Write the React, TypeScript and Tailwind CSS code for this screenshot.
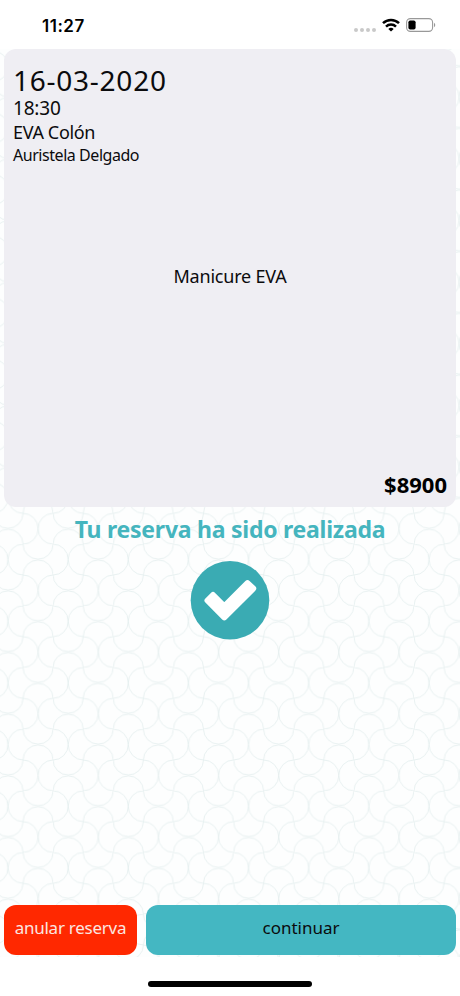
import React from 'react';

const BOOKING = {
  date: '16-03-2020',
  time: '18:30',
  place: 'EVA Colón',
  professional: 'Auristela Delgado',
  service: 'Manicure EVA',
  price: '$8900',
};

// One tile of the wavy lattice: every edge of a 2x2 grid is a half circle
const TILE_PATH = [
  'M0 0a15 15 0 0 1 30 0a15 15 0 0 0 30 0',
  'M0 30.83a15 15 0 0 0 30 0a15 15 0 0 1 30 0',
  'M0 61.66a15 15 0 0 1 30 0a15 15 0 0 0 30 0',
  'M0 0a15 15.4 0 0 1 0 30.83a15 15.4 0 0 0 0 30.83',
  'M30 0a15 15.4 0 0 0 0 30.83a15 15.4 0 0 1 0 30.83',
  'M60 0a15 15.4 0 0 1 0 30.83a15 15.4 0 0 0 0 30.83',
].join('');

function WavePattern() {
  return (
    <svg className="absolute inset-0 h-full w-full" aria-hidden="true">
      <defs>
        <pattern
          id="waves"
          x="53"
          y="1.9"
          width="60"
          height="61.66"
          patternUnits="userSpaceOnUse"
          patternTransform="scale(1.0025 1)"
        >
          <path d={TILE_PATH} fill="none" stroke="#e3eeee" strokeWidth="0.8" />
        </pattern>
      </defs>
      <rect width="100%" height="100%" fill="url(#waves)" />
    </svg>
  );
}

function StatusBar() {
  return (
    <div className="flex h-[49px] shrink-0 items-start justify-between bg-white pl-[42px] pr-6 pt-[15px]">
      <span className="font-['Inter'] text-[17px] font-semibold leading-[22px] tracking-[0.5px] text-black">11:27</span>
      <div className="flex h-5 items-center">
        <div className="mr-[6px] mt-[9px] flex gap-[2px]">
          {[0, 1, 2, 3].map((dot) => (
            <span key={dot} className="h-[4px] w-[4px] rounded-full bg-[#c9c9c9]" />
          ))}
        </div>
        <svg className="mr-[6px]" width="18" height="14" viewBox="0 0 18 14" fill="none" stroke="#000" strokeWidth="2.5">
          <path d="M1 5.2a11.5 11.5 0 0 1 16 0" />
          <path d="M4 8.6a7.2 7.2 0 0 1 10 0" />
          <path d="M9 13.6L6.3 11a3.9 3.9 0 0 1 5.4 0z" fill="#000" stroke="none" />
        </svg>
        <svg width="30" height="14" viewBox="0 0 30 14">
          <rect x="0.6" y="0.6" width="26" height="12.8" rx="3.8" fill="#fff" stroke="#999" strokeWidth="1.1" />
          <rect x="2.4" y="2.4" width="7.2" height="9.2" rx="1.8" fill="#000" />
          <path d="M28 4.8c1.7.7 1.7 3.7 0 4.4z" fill="#999" />
        </svg>
      </div>
    </div>
  );
}

function BookingCard() {
  return (
    <section className="flex h-[458px] shrink-0 flex-col rounded-xl bg-[#efeef3] px-[9px] pb-[10px] pt-[14px]">
      <p className="text-[28px] leading-[34px] tracking-[0.75px]">{BOOKING.date}</p>
      <p className="text-[19px] leading-[23px] tracking-[-0.2px]">{BOOKING.time}</p>
      <p className="text-[18px] leading-6 tracking-[-0.35px]">{BOOKING.place}</p>
      <p className="mt-px text-[16px] leading-5 tracking-[-0.45px]">{BOOKING.professional}</p>
      <p className="mt-[99px] text-center text-[18px] leading-6 tracking-[-0.2px]">{BOOKING.service}</p>
      <p className="mt-auto text-right text-[22px] font-bold leading-[26px] text-black">{BOOKING.price}</p>
    </section>
  );
}

function CheckBadge() {
  return (
    <svg className="mx-auto mt-[15px] shrink-0" width="80" height="80" viewBox="190 560 80 80">
      <circle cx="230" cy="600.2" r="39.3" fill="#3aabb3" />
      <path
        d="M207.5 600.5L213 595L224.3 606.3L247.5 583.1L253.2 588.5L224.3 617.3Z"
        fill="#fff"
        stroke="#fff"
        strokeWidth="6"
        strokeLinejoin="round"
      />
    </svg>
  );
}

export default function App() {
  return (
    <div className="flex h-[996px] w-[460px] flex-col overflow-hidden bg-white font-['Noto_Sans',sans-serif] text-[#0b0b0d]">
      <StatusBar />
      <main className="relative flex h-[908px] shrink-0 flex-col bg-[#fdfefe]">
        <WavePattern />
        <div className="relative flex h-full flex-col px-1">
          <BookingCard />
          <h1 className="mt-[6px] text-center text-[23px] font-bold leading-8 tracking-[-0.25px] text-[#45b5be]">
            Tu reserva ha sido realizada
          </h1>
          <CheckBadge />
          <div className="mb-[2px] mt-auto flex h-[50px] gap-[9px] text-[17px]">
            <button className="w-[133px] rounded-xl bg-[#ff2800] pb-1 tracking-[-0.25px] text-[#fbe6e0]">
              anular reserva
            </button>
            <button className="flex-1 rounded-xl bg-[#44b7c2] pb-1">continuar</button>
          </div>
        </div>
      </main>
      <footer className="flex flex-1 justify-center bg-white pt-6">
        <div className="h-[6px] w-[164px] rounded-full bg-black" />
      </footer>
    </div>
  );
}
